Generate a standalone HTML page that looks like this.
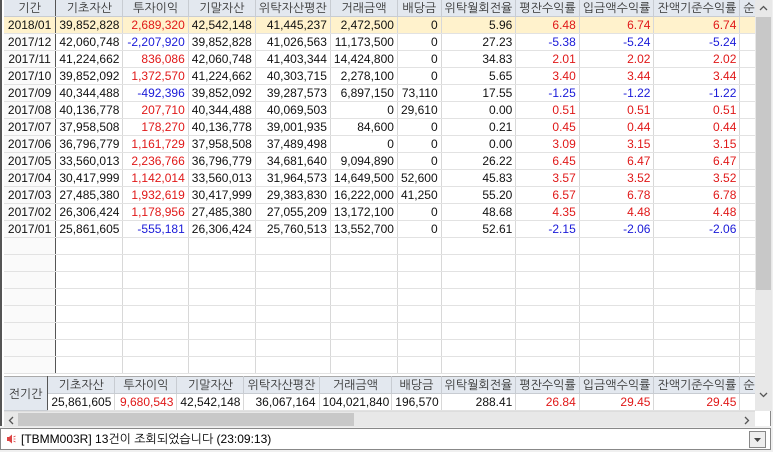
<!DOCTYPE html>
<html><head><meta charset="utf-8"><style>
body{margin:0;width:773px;height:452px;background:#f0f0f0;font-family:"Liberation Sans","NanumGothic","Noto Sans CJK KR",sans-serif;font-size:12px;position:relative;overflow:hidden}
.wrap{position:absolute;left:0;top:0;width:771px;height:426px;border-left:2px solid #555;border-right:1px solid #888;box-sizing:border-box;background:#fff}
table{border-collapse:collapse;table-layout:fixed;position:absolute;left:2px}
td{height:16px;padding:0 3px;border-right:1px solid #d8d8d8;border-bottom:1px solid #e2e2e2;white-space:nowrap;overflow:hidden;text-align:right;color:#111;line-height:16px}
tr.h td{background:#e3e8ef;text-align:center;border-color:#c8ccd2;color:#333}
td.d{text-align:center;background:#fafafa;border-right:1px solid #555}
tr.s td{background:#fff2cc}
.r{color:#e01818}.b{color:#1a1ad8}
td.rt{direction:rtl;text-align:left;padding-right:2px}
.vs{position:absolute;left:753px;top:0;width:17px;height:411px;background:#e8e8e8}
.vt{position:absolute;left:1px;top:17px;width:15px;height:273px;background:#c8c8c8}
.hs{position:absolute;left:2px;top:411px;width:751px;height:15px;background:#e8e8e8;border-top:1px solid #ddd}
.ht{position:absolute;left:14px;top:1px;width:336px;height:13px;background:#c8c8c8}
.st{position:absolute;left:0;top:428px;width:771px;height:22px;background:#fff;border:1px solid #888;box-sizing:border-box;line-height:20px;padding-left:20px;font-size:12px}
svg{position:absolute}
</style></head><body>
<div class="wrap">
<table style="top:0">
<colgroup><col style="width:66px"><col style="width:69px"><col style="width:73px"><col style="width:67px"><col style="width:78px"><col style="width:61px"><col style="width:42px"><col style="width:67px"><col style="width:60px"><col style="width:72px"><col style="width:73px"><col style="width:23px"></colgroup>
<tr class="h"><td style="border-right:1px solid #555">기간</td><td>기초자산</td><td>투자이익</td><td>기말자산</td><td>위탁자산평잔</td><td>거래금액</td><td>배당금</td><td>위탁월회전율</td><td>평잔수익률</td><td>입금액수익률</td><td>잔액기준수익률</td><td>순가</td></tr>
<tr class="s"><td class="d" style="background:#fff2cc">2018/01</td><td>39,852,828</td><td class="r">2,689,320</td><td>42,542,148</td><td>41,445,237</td><td>2,472,500</td><td>0</td><td>5.96</td><td class="r">6.48</td><td class="r">6.74</td><td class="r">6.74</td><td></td></tr>
<tr><td class="d">2017/12</td><td>42,060,748</td><td class="b">-2,207,920</td><td>39,852,828</td><td>41,026,563</td><td>11,173,500</td><td>0</td><td>27.23</td><td class="b">-5.38</td><td class="b">-5.24</td><td class="b">-5.24</td><td></td></tr>
<tr><td class="d">2017/11</td><td>41,224,662</td><td class="r">836,086</td><td>42,060,748</td><td>41,403,344</td><td>14,424,800</td><td>0</td><td>34.83</td><td class="r">2.01</td><td class="r">2.02</td><td class="r">2.02</td><td></td></tr>
<tr><td class="d">2017/10</td><td>39,852,092</td><td class="r">1,372,570</td><td>41,224,662</td><td>40,303,715</td><td>2,278,100</td><td>0</td><td>5.65</td><td class="r">3.40</td><td class="r">3.44</td><td class="r">3.44</td><td></td></tr>
<tr><td class="d">2017/09</td><td>40,344,488</td><td class="b">-492,396</td><td>39,852,092</td><td>39,287,573</td><td>6,897,150</td><td>73,110</td><td>17.55</td><td class="b">-1.25</td><td class="b">-1.22</td><td class="b">-1.22</td><td></td></tr>
<tr><td class="d">2017/08</td><td>40,136,778</td><td class="r">207,710</td><td>40,344,488</td><td>40,069,503</td><td>0</td><td>29,610</td><td>0.00</td><td class="r">0.51</td><td class="r">0.51</td><td class="r">0.51</td><td></td></tr>
<tr><td class="d">2017/07</td><td>37,958,508</td><td class="r">178,270</td><td>40,136,778</td><td>39,001,935</td><td>84,600</td><td>0</td><td>0.21</td><td class="r">0.45</td><td class="r">0.44</td><td class="r">0.44</td><td></td></tr>
<tr><td class="d">2017/06</td><td>36,796,779</td><td class="r">1,161,729</td><td>37,958,508</td><td>37,489,498</td><td>0</td><td>0</td><td>0.00</td><td class="r">3.09</td><td class="r">3.15</td><td class="r">3.15</td><td></td></tr>
<tr><td class="d">2017/05</td><td>33,560,013</td><td class="r">2,236,766</td><td>36,796,779</td><td>34,681,640</td><td>9,094,890</td><td>0</td><td>26.22</td><td class="r">6.45</td><td class="r">6.47</td><td class="r">6.47</td><td></td></tr>
<tr><td class="d">2017/04</td><td>30,417,999</td><td class="r">1,142,014</td><td>33,560,013</td><td>31,964,573</td><td>14,649,500</td><td>52,600</td><td>45.83</td><td class="r">3.57</td><td class="r">3.52</td><td class="r">3.52</td><td></td></tr>
<tr><td class="d">2017/03</td><td>27,485,380</td><td class="r">1,932,619</td><td>30,417,999</td><td>29,383,830</td><td>16,222,000</td><td>41,250</td><td>55.20</td><td class="r">6.57</td><td class="r">6.78</td><td class="r">6.78</td><td></td></tr>
<tr><td class="d">2017/02</td><td>26,306,424</td><td class="r">1,178,956</td><td>27,485,380</td><td>27,055,209</td><td>13,172,100</td><td>0</td><td>48.68</td><td class="r">4.35</td><td class="r">4.48</td><td class="r">4.48</td><td></td></tr>
<tr><td class="d">2017/01</td><td>25,861,605</td><td class="b">-555,181</td><td>26,306,424</td><td>25,760,513</td><td>13,552,700</td><td>0</td><td>52.61</td><td class="b">-2.15</td><td class="b">-2.06</td><td class="b">-2.06</td><td></td></tr>
<tr><td class="d"></td><td></td><td></td><td></td><td></td><td></td><td></td><td></td><td></td><td></td><td></td><td></td></tr>
<tr><td class="d"></td><td></td><td></td><td></td><td></td><td></td><td></td><td></td><td></td><td></td><td></td><td></td></tr>
<tr><td class="d"></td><td></td><td></td><td></td><td></td><td></td><td></td><td></td><td></td><td></td><td></td><td></td></tr>
<tr><td class="d"></td><td></td><td></td><td></td><td></td><td></td><td></td><td></td><td></td><td></td><td></td><td></td></tr>
<tr><td class="d"></td><td></td><td></td><td></td><td></td><td></td><td></td><td></td><td></td><td></td><td></td><td></td></tr>
<tr><td class="d"></td><td></td><td></td><td></td><td></td><td></td><td></td><td></td><td></td><td></td><td></td><td></td></tr>
<tr><td class="d"></td><td></td><td></td><td></td><td></td><td></td><td></td><td></td><td></td><td></td><td></td><td></td></tr>
<tr><td class="d" style="height:15px"></td><td></td><td></td><td></td><td></td><td></td><td></td><td></td><td></td><td></td><td></td><td></td></tr>
</table>
<table style="top:376px;border-top:1px solid #aaa">
<colgroup><col style="width:66px"><col style="width:69px"><col style="width:73px"><col style="width:67px"><col style="width:78px"><col style="width:61px"><col style="width:42px"><col style="width:67px"><col style="width:60px"><col style="width:72px"><col style="width:73px"><col style="width:23px"></colgroup>
<tr class="h"><td rowspan="2" style="border-right:1px solid #555;background:#e3e8ef">전기간</td><td>기초자산</td><td>투자이익</td><td>기말자산</td><td>위탁자산평잔</td><td>거래금액</td><td>배당금</td><td>위탁월회전율</td><td>평잔수익률</td><td>입금액수익률</td><td>잔액기준수익률</td><td>순가</td></tr>
<tr><td>25,861,605</td><td class="r">9,680,543</td><td>42,542,148</td><td>36,067,164</td><td class="rt">104,021,840</td><td class="rt">196,570</td><td>288.41</td><td class="r">26.84</td><td class="r">29.45</td><td class="r">29.45</td><td></td></tr>
</table>
<div class="vs">
<svg style="left:4px;top:5px" width="9" height="6"><path d="M1 5 L4.5 1.5 L8 5" stroke="#555" stroke-width="1.3" fill="none"/></svg>
<div class="vt"></div>
<svg style="left:4px;top:392px" width="9" height="6"><path d="M1 1 L4.5 4.5 L8 1" stroke="#555" stroke-width="1.3" fill="none"/></svg>
</div>
<div class="hs">
<svg style="left:4px;top:4px" width="6" height="9"><path d="M5 1 L1.5 4.5 L5 8" stroke="#555" stroke-width="1.3" fill="none"/></svg>
<div class="ht"></div>
<svg style="left:740px;top:4px" width="6" height="9"><path d="M1 1 L4.5 4.5 L1 8" stroke="#555" stroke-width="1.3" fill="none"/></svg>
</div>
</div>
<div class="st"><svg style="left:5px;top:5px" width="10" height="10"><path d="M1 3 H3 L6 0.5 V9.5 L3 7 H1 Z" fill="#d44"/><path d="M7.5 3 L9.5 2 M7.5 5 H9.5 M7.5 7 L9.5 8" stroke="#d44" stroke-width="0.8"/></svg>[TBMM003R] 13건이 조회되었습니다 (23:09:13)<div style="position:absolute;right:4px;top:2px;width:15px;height:15px;border:1px solid #888;background:#eee"><svg style="left:4px;top:6px" width="7" height="4"><path d="M0 0 H7 L3.5 4 Z" fill="#444"/></svg></div></div>
</body></html>
